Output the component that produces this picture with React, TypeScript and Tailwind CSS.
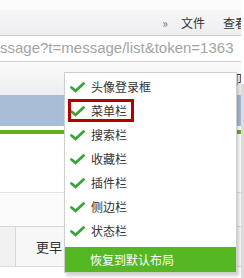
import React from 'react'

const items = ['头像登录框', '菜单栏', '搜索栏', '收藏栏', '插件栏', '侧边栏', '状态栏']

const cjk = { fontFamily: '"Noto Sans CJK SC", "Noto Sans", sans-serif' }

function Check() {
  return (
    <svg width="15" height="11" viewBox="0 0 15 11" className="shrink-0">
      <path d="M1.5 5.5 L5.5 9 L13.5 1.5" fill="none" stroke="#3ba53a" strokeWidth="2.8" strokeLinecap="round" strokeLinejoin="round" />
    </svg>
  )
}

export default function App() {
  return (
    <div className="relative w-[244px] h-[278px] overflow-hidden bg-white" style={cjk}>
      <div className="flex">
        <div className="w-[241px] flex flex-col">
          {/* top toolbar */}
          <div className="h-[10px] bg-[#fcfcfc]" />
          <div className="h-[26px] flex items-center justify-end bg-gradient-to-b from-[#f7f7f9] to-[#eeeef1] border-b border-[#c9c9c9] text-[12px] text-[#333] whitespace-nowrap overflow-hidden">
            <span className="text-[#777] mr-[13px]">»</span>
            <span className="mr-[18px]">文件</span>
            <span className="-mr-[6px]">查看</span>
          </div>
          {/* address bar */}
          <div className="h-[26px] flex items-center border-b border-[#cfcfcf] bg-white overflow-hidden whitespace-nowrap">
            <span className="text-[15px] text-[#a3a3a3]" style={{ fontFamily: '"Liberation Sans", sans-serif' }}>
              ssage?t=message/list&amp;token=1363
            </span>
          </div>
          <div className="h-[33px] flex items-center justify-end bg-gradient-to-b from-[#fafafa] to-[#eceef1] text-[12px] text-[#333]">
            <span className="-mr-[1px]">打印</span>
          </div>
          <div className="h-[31px] bg-[#a8bdd6]" />
          <div className="h-[4px] bg-white" />
          <div className="h-[4px] bg-[#64b01c]" />
          <div className="h-[59px] bg-white border-b border-[#e2e2e2]" />
          <div className="h-[34px] bg-[#fbfbfb] border-b border-[#d6d6d6]" />
          <div className="h-[40px] flex border-b border-[#dcdcdc]">
            <div className="w-[16px] bg-[#f1f1f1] border-r border-[#d8d8d8]" />
            <div className="flex-1 bg-[#f7f7f7] flex items-center pl-[20px] text-[13px] text-[#333]">更早</div>
          </div>
          <div className="flex-1 bg-white" />
        </div>
        <div className="w-[3px] flex flex-col">
          <div className="h-[84px] bg-white" />
          <div className="h-[194px] bg-[#dcdcdc]" />
        </div>
      </div>

      {/* dropdown menu */}
      <div className="absolute left-[64px] top-[72px] w-[173px] bg-white border border-[#cfcfcf] shadow-[2px_3px_3px_rgba(0,0,0,0.18)] flex flex-col pt-[2px]">
        {items.map((label, i) => (
          <div key={label} className="relative h-[24px] flex items-center pl-[5px] gap-[6px] text-[12px] text-[#333]">
            <Check />
            <span>{label}</span>
            {i === 1 && (
              <div className="absolute left-[3px] top-0 w-[66px] h-[23px] border-[3px] border-[#b30000]" />
            )}
          </div>
        ))}
        <div className="mt-[4px] h-[25px] bg-[#55b722] flex items-center pl-[25px] text-[12px] text-white">
          恢复到默认布局
        </div>
      </div>
    </div>
  )
}
